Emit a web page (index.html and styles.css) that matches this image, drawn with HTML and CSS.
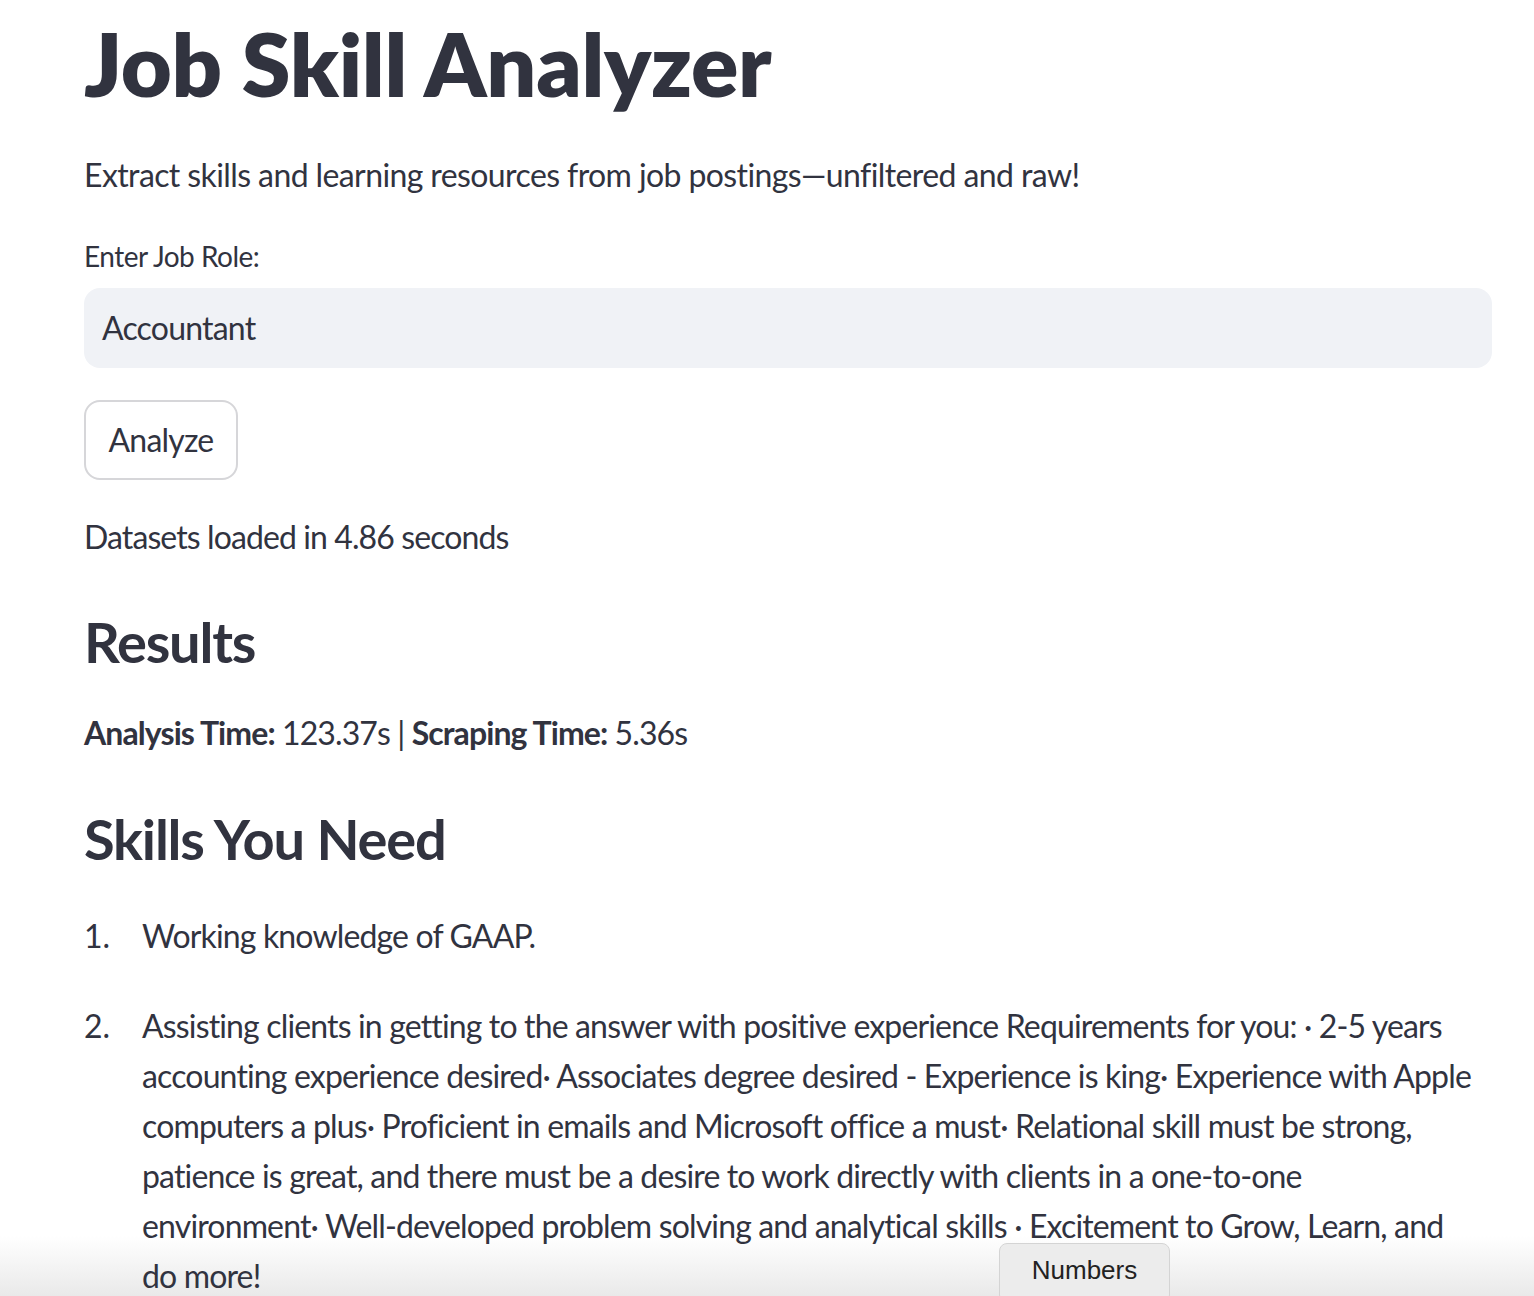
FILE: index.html
```html
<!DOCTYPE html>
<html lang="en">
<head>
<meta charset="utf-8">
<title>Job Skill Analyzer</title>
<link rel="stylesheet" href="styles.css">
</head>
<body>
<main class="app">
  <h1 class="title">Job Skill Analyzer</h1>
  <p class="subtitle">Extract skills and learning resources from job postings—unfiltered and raw!</p>
  <label class="label" for="role">Enter Job Role:</label>
  <div class="input" id="role">Accountant</div>
  <div class="btn-row"><button class="btn">Analyze</button></div>
  <p class="text datasets">Datasets loaded in 4.86 seconds</p>
  <h3 class="h3 results">Results</h3>
  <p class="text timing"><b>Analysis Time:</b> 123.37s | <b>Scraping Time:</b> 5.36s</p>
  <h3 class="h3 skills">Skills You Need</h3>
  <ol class="list">
    <li class="item first"><span class="num">1.</span><span class="body">Working knowledge of GAAP.</span></li>
    <li class="item second"><span class="num">2.</span><span class="body">Assisting clients in getting to the answer with positive experience Requirements for you: · 2-5 years accounting experience desired· Associates degree desired - Experience is king· Experience with Apple computers a plus· Proficient in emails and Microsoft office a must· Relational skill must be strong, patience is great, and there must be a desire to work directly with clients in a one-to-one environment· Well-developed problem solving and analytical skills · Excitement to Grow, Learn, and do more!</span></li>
  </ol>
</main>
<div class="tooltip">Numbers</div>
</body>
</html>
```
FILE: styles.css
```css
html, body {
  margin: 0;
  padding: 0;
  overflow: hidden;
}
body {
  font-family: "Lato", "Liberation Sans", sans-serif;
  color: #31333f;
  height: 1296px;
  background: #ffffff linear-gradient(to bottom, #ffffff, #e9e9e9) no-repeat left bottom / 100% 60px;
}
.app {
  display: flex;
  flex-direction: column;
  align-items: stretch;
  width: 1408px;
  margin-left: 84px;
}
.title {
  margin: 11px 0 0 0;
  font-size: 88px;
  font-weight: 800;
  line-height: 1.2;
  letter-spacing: -0.3px;
}
.subtitle, .text {
  margin: 0;
  font-size: 32px;
  line-height: 51.2px;
  letter-spacing: -0.6px;
}
.subtitle { margin-top: 32px; }
.label {
  margin-top: 36px;
  font-size: 28px;
  line-height: 40px;
  letter-spacing: -0.5px;
}
.input {
  margin-top: 12px;
  height: 80px;
  box-sizing: border-box;
  background: #f0f2f6;
  border-radius: 16px;
  padding: 0 18px;
  display: flex;
  align-items: center;
  font-size: 32px;
  letter-spacing: -0.8px;
}
.btn-row { margin-top: 32px; display: flex; }
.btn {
  height: 80px;
  width: 154px;
  box-sizing: border-box;
  border: 2px solid #d6d6d9;
  border-radius: 16px;
  background: #ffffff;
  font-family: inherit;
  color: #31333f;
  font-size: 32px;
  letter-spacing: -0.8px;
  padding: 0;
}
.datasets { margin-top: 31px; letter-spacing: -0.9px; }
.h3 {
  margin: 0;
  font-size: 56px;
  font-weight: 700;
  line-height: 1.2;
  letter-spacing: -1.2px;
}
.results { margin-top: 46px; }
.timing { margin-top: 32px; letter-spacing: -0.9px; }
.timing b { font-weight: 700; }
.skills { margin-top: 47px; }
.list {
  list-style: none;
  margin: 38px 0 0 0;
  padding: 0 14px 0 0;
}
.item {
  display: flex;
  font-size: 32px;
  line-height: 50px;
  letter-spacing: -0.85px;
}
.item.second { margin-top: 40px; }
.num {
  flex: 0 0 58px;
  letter-spacing: 0;
}
.body { flex: 1; }
.tooltip {
  position: fixed;
  left: 999px;
  top: 1243px;
  width: 171px;
  height: 60px;
  box-sizing: border-box;
  background: #ececec;
  border: 1px solid #d4d4d4;
  border-radius: 8px;
  font-family: "Liberation Sans", "Inter", sans-serif;
  font-size: 26px;
  color: #222;
  text-align: center;
  padding-top: 11px;
}
```
